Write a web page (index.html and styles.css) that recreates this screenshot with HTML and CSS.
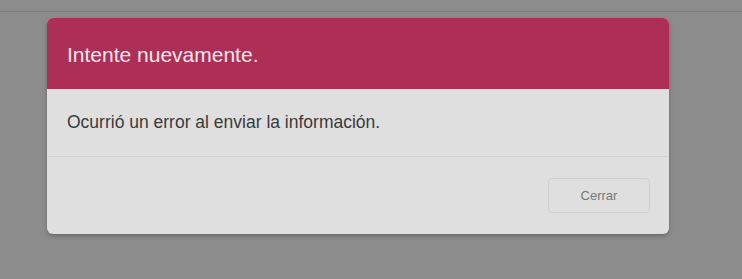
FILE: index.html
```html
<!DOCTYPE html>
<html lang="es">
<head>
  <meta charset="UTF-8" />
  <title>Error</title>
  <link rel="stylesheet" href="styles.css">
</head>
<body>
  <div class="topbar"></div>

  <div class="modal">
    <div class="modal-header">
      <h4 class="modal-title">Intente nuevamente.</h4>
    </div>
    <div class="modal-body">
      <p>Ocurrió un error al enviar la información.</p>
    </div>
    <div class="modal-footer">
      <button class="btn-close">Cerrar</button>
    </div>
  </div>
</body>
</html>
```

FILE: styles.css
```css
* {
  box-sizing: border-box;
}

body {
  margin: 0;
  font-family: "Liberation Sans", Arial, sans-serif;
  background-color: #8c8c8c;
  height: 279px;
  overflow: hidden;
}

/* barra de navegación detrás del fondo */
.topbar {
  height: 12px;
  border-bottom: 1px solid #7c7c7c;
}

.modal {
  width: 622px;
  margin: 6px 0 0 47px;
  background-color: #dfdfdf;
  border-radius: 6px;
  overflow: hidden;
  box-shadow: 0 2px 4px rgba(0, 0, 0, 0.25);
}

.modal-header {
  background-color: #ae2f55;
  height: 71px;
  padding: 2px 20px 0;
  display: flex;
  align-items: center;
}

.modal-title {
  margin: 0;
  font-size: 21px;
  font-weight: normal;
  color: #f8e8ed;
}

.modal-body {
  height: 68px;
  padding: 0 20px;
  display: flex;
  align-items: center;
  border-bottom: 1px solid #d3d3d3;
}

.modal-body p {
  margin: 0;
  font-size: 17.5px;
  color: #3a3a3a;
}

.modal-footer {
  height: 77px;
  padding: 0 19px;
  display: flex;
  align-items: center;
  justify-content: flex-end;
}

.btn-close {
  width: 102px;
  height: 35px;
  background-color: #dfdfdf;
  border: 1px solid #d0d0d0;
  border-radius: 4px;
  font-family: inherit;
  font-size: 13px;
  color: #777;
  cursor: pointer;
}
```
